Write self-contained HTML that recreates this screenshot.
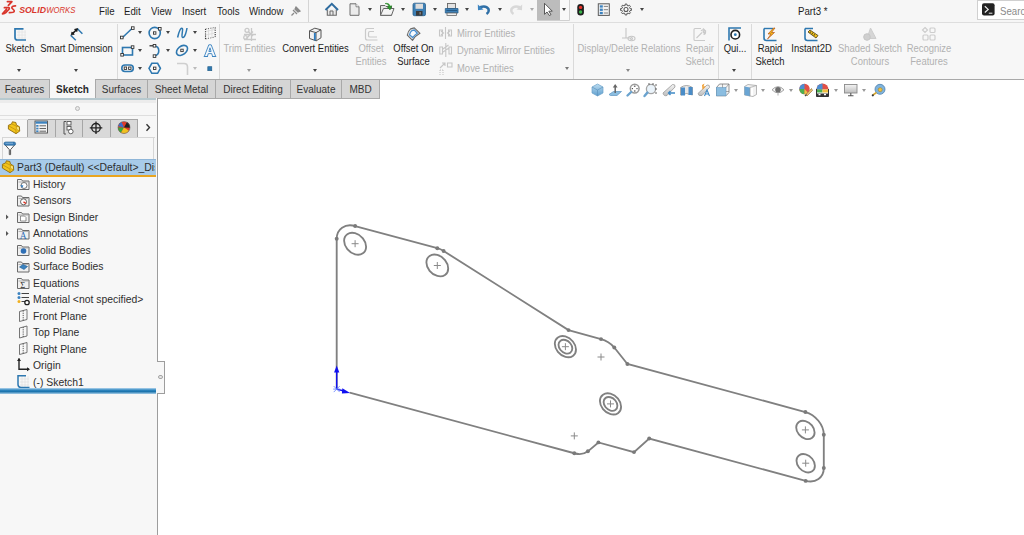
<!DOCTYPE html>
<html><head><meta charset="utf-8">
<style>
*{box-sizing:border-box;margin:0;padding:0}
html,body{width:1024px;height:535px;overflow:hidden;background:#fff;font-family:"Liberation Sans",sans-serif;color:#1e1e1e}
.a{position:absolute}
.t{position:absolute;white-space:nowrap;font-size:10px;line-height:13px;transform:scaleX(0.945);transform-origin:0 50%}
.t.ctr{transform-origin:50% 50%}
.dis{color:#b2b2b2}
.ctr{text-align:center}
#title{left:0;top:0;width:1024px;height:23px;background:#f6f6f6;border-bottom:1px solid #dedede}
#ribbon{left:0;top:23px;width:1024px;height:57px;background:#f7f7f7;border-bottom:1px solid #a9a9a9}
.sep{position:absolute;width:1px;background:#dadada}
.menu{position:absolute;top:4px;font-size:10.5px;transform:scaleX(0.92);transform-origin:0 50%;line-height:14px;color:#1e1e1e}
.tab{position:absolute;top:79px;height:20px;background:#d5d5d5;border:1px solid #a9a9a9;font-size:10px;line-height:18px;padding-top:1px;text-align:center;color:#333}
.tab.act{background:#f7f7f7;border-top:none;border-bottom:none;font-weight:bold;height:20px;padding-top:2px;color:#2a2a2a}
.arr{position:absolute;width:0;height:0;border-left:2.5px solid transparent;border-right:2.5px solid transparent;border-top:3px solid #444}
.arr.g{border-top-color:#888}
#panel{left:0;top:98px;width:158px;height:437px;background:#f7f7f7;border-right:1px solid #9d9d9d}
.tr{position:absolute;left:33px;font-size:10.4px;line-height:14px;color:#2e2e2e;white-space:nowrap}
</style></head><body>

<!-- TITLE BAR -->
<div id="title" class="a"></div>
<div class="a" style="left:0;top:0;width:80px;height:18px">
<svg width="80" height="18" viewBox="0 0 80 18">
  <g fill="none" stroke="#d9362c" stroke-width="1.7" stroke-linejoin="round" stroke-linecap="round">
    <path d="M7.4 1.6H11.9L8.4 5.4"/>
    <path d="M4.4 7.7H8.6Q9.8 7.9 9 9.2L6.2 12.3Q4.3 14 2.5 13.9L6.4 9.4"/>
    <path d="M15.5 5.9Q12.6 5.8 11.9 7.1Q11.4 8.1 12.9 9.1Q14.7 10.3 14.2 11.5Q13.7 12.7 9.4 12.7"/>
  </g>
  <text x="19.2" y="13" font-family="Liberation Sans" font-size="8.7" font-style="italic" fill="#d9362c"><tspan font-weight="bold" textLength="26.8" lengthAdjust="spacingAndGlyphs">SOLID</tspan><tspan x="46.2" textLength="29.2" lengthAdjust="spacingAndGlyphs" font-weight="normal">WORKS</tspan></text>
</svg>
</div>
<div class="menu" style="left:99px">File</div>
<div class="menu" style="left:124px">Edit</div>
<div class="menu" style="left:151px">View</div>
<div class="menu" style="left:182px">Insert</div>
<div class="menu" style="left:217px">Tools</div>
<div class="menu" style="left:249px">Window</div>
<div class="a" style="left:290px;top:3px"><svg width="12" height="12"><path d="M4 8 L1.5 10.5 M3 5 L7 9 M5 3 L9 7 M6 2 L10 6 L8 7 L5 4Z" stroke="#8a8a8a" stroke-width="1.3" fill="#8a8a8a"/></svg></div>
<div class="sep" style="left:308px;top:0;height:22px;background:#d4d4d4"></div>

<!--qat-->
<svg class="a" style="left:322px;top:0" width="330" height="22" viewBox="322 0 330 22">
 <!-- home -->
 <path d="M327.3 9.5V15.3H336.3V9.5" fill="#e9e9e9" stroke="#6b6b6b" stroke-width="1.1"/>
 <path d="M330 15.3V11H333V15.3" fill="none" stroke="#6b6b6b" stroke-width="1"/>
 <path d="M325.5 10L331.8 3.8L338 10" fill="none" stroke="#2f6c9f" stroke-width="2"/>
 <!-- new doc -->
 <path d="M350 3.8H356L359 6.8V15.3H350Z" fill="#ececec" stroke="#6e6e6e" stroke-width="1"/>
 <path d="M356 3.8V6.8H359" fill="#fff" stroke="#6e6e6e" stroke-width="0.8"/>
 <!-- open -->
 <path d="M380.5 5.5H385L386 6.5H391.5V15.3H380.5Z" fill="#e4e4e4" stroke="#666" stroke-width="1"/>
 <path d="M380.5 15.3L383.5 8.5H394L391.5 15.3Z" fill="#f4f4f4" stroke="#666" stroke-width="1"/>
 <path d="M385 3.5Q388 3.5 389 6.5L387.3 7L390 10L391.8 5.8L390.2 6.2Q389 2.5 385 3.5Z" fill="#2a9a2a" stroke="#1d7d1d" stroke-width="0.5"/>
 <!-- save -->
 <rect x="413" y="3.2" width="12.5" height="12.5" rx="1.5" fill="#3d7fb5" stroke="#2a5f8c" stroke-width="0.8"/>
 <rect x="415.5" y="3.8" width="7.5" height="5" fill="#dcdcdc"/>
 <rect x="416" y="11" width="6.5" height="4.7" fill="#3a3a3a"/>
 <rect x="419.5" y="12" width="1.3" height="2.5" fill="#8a8a8a"/>
 <!-- print -->
 <rect x="447.5" y="3.5" width="8" height="5" fill="#e2e2e2" stroke="#666" stroke-width="0.9"/>
 <path d="M445.3 8.5H458V13H445.3Z" fill="#3d7fb5" stroke="#2a5f8c" stroke-width="0.8"/>
 <rect x="447" y="13" width="9.5" height="2.5" fill="#f0f0f0" stroke="#666" stroke-width="0.8"/>
 <path d="M446.5 10.5H457" stroke="#1e4f78" stroke-width="0.8"/>
 <!-- undo -->
 <path d="M480 7.2Q486 5 488.5 9Q489.5 12 486.5 14" fill="none" stroke="#2f6fa6" stroke-width="2.4"/>
 <path d="M477.8 4.6L478 10.2L483.5 9.5Z" fill="#3c83bf"/>
 <!-- redo -->
 <path d="M520 7.2Q514 5 511.5 9Q510.5 12 513.5 14" fill="none" stroke="#d8d8d8" stroke-width="2.4"/>
 <path d="M522.2 4.6L522 10.2L516.5 9.5Z" fill="#d8d8d8"/>
 <!-- select btn -->
 <rect x="537" y="0" width="23" height="20.5" fill="#bcbcbc"/>
 <rect x="560" y="0" width="9.5" height="20.5" fill="#f9f9f9"/>
 <path d="M569.5 0V20.5H537" fill="none" stroke="#d0d0d0" stroke-width="1"/>
 <path d="M544.5 3.3V14.3L547 12L549.3 15.5L551 14.6L548.8 11.2H552.3Z" fill="#fff" stroke="#4a4a4a" stroke-width="0.9"/>
 <!-- traffic light -->
 <rect x="577.3" y="4" width="6.6" height="11.5" rx="3.3" fill="#1e1e1e"/>
 <circle cx="580.6" cy="7.4" r="1.7" fill="#e8332a"/>
 <circle cx="580.6" cy="12" r="1.7" fill="#3bb54a"/>
 <!-- list -->
 <rect x="598.3" y="3.8" width="11" height="11.6" fill="#f3f3f3" stroke="#5a5a5a" stroke-width="1"/>
 <rect x="599.8" y="5.3" width="3" height="2.3" fill="#3c83c0"/><rect x="599.8" y="8.6" width="3" height="2.3" fill="#3c83c0"/><rect x="599.8" y="11.9" width="3" height="2.3" fill="#3c83c0"/>
 <path d="M603.8 6.4H608M603.8 9.7H608M603.8 13H608" stroke="#777" stroke-width="0.9"/>
 <!-- gear -->
 <path d="M625.05 4.08 L626.95 4.08 L627.04 5.43 L628.42 6.06 L629.16 5.00 L630.50 6.34 L629.62 7.36 L630.14 8.78 L631.42 8.55 L631.42 10.45 L630.07 10.54 L629.44 11.92 L630.50 12.66 L629.16 14.00 L628.14 13.12 L626.72 13.64 L626.95 14.92 L625.05 14.92 L624.96 13.57 L623.58 12.94 L622.84 14.00 L621.50 12.66 L622.38 11.64 L621.86 10.22 L620.58 10.45 L620.58 8.55 L621.93 8.46 L622.56 7.08 L621.50 6.34 L622.84 5.00 L623.86 5.88 L625.28 5.36Z" fill="#f7f7f7" stroke="#5a5a5a" stroke-width="1" stroke-linejoin="round"/>
 <circle cx="626" cy="9.5" r="2" fill="#fff" stroke="#5a5a5a" stroke-width="1.1"/>

</svg>
<div class="arr" style="left:368px;top:8px"></div>
<div class="arr" style="left:401px;top:8px"></div>
<div class="arr" style="left:433px;top:8px"></div>
<div class="arr" style="left:465px;top:8px"></div>
<div class="arr" style="left:497.5px;top:8px"></div>
<div class="arr" style="left:529.5px;top:8px;border-top-color:#aaa"></div>
<div class="arr" style="left:562px;top:8px"></div>
<div class="arr" style="left:640px;top:8px"></div>

<!--/qat-->

<div class="menu" style="left:798px;top:4px">Part3 *</div>
<div class="a" style="left:977px;top:0px;width:50px;height:20px;background:#fff;border:1px solid #d0d0d0"></div>
<svg class="a" style="left:980px;top:1px" width="18" height="18" viewBox="980 1 18 18">
 <rect x="982" y="3.2" width="12.6" height="12.4" rx="2" fill="#222"/>
 <path d="M984.8 6.3L988.2 9.4L984.8 12.5" fill="none" stroke="#eee" stroke-width="1.2"/>
 <path d="M988.8 13.2H992.4" stroke="#eee" stroke-width="1"/>
</svg>
<div class="menu" style="left:1000px;top:3.5px;color:#8a8a8a">Search</div>

<!-- RIBBON -->
<div id="ribbon" class="a"></div>
<!--ribbonc-->
<div class="sep" style="left:117px;top:24px;height:55px"></div>
<div class="sep" style="left:219px;top:24px;height:55px"></div>
<div class="sep" style="left:573px;top:24px;height:55px"></div>
<div class="sep" style="left:718px;top:24px;height:55px"></div>
<div class="sep" style="left:751px;top:24px;height:55px"></div>

<!-- Sketch -->
<svg class="a" style="left:12px;top:26px" width="18" height="18" viewBox="0 0 18 18">
 <g stroke="#e4e4e4" stroke-width="0.8"><path d="M5 6H14M5 9H14M5 12H14M7 4V14M10 4V14M13 4V14"/></g>
 <path d="M11.5 2.8H3V11.5Q3 14 5.5 14H14" fill="none" stroke="#2e78b0" stroke-width="1.7"/>
</svg>
<div class="t ctr" style="left:0;top:42px;width:40px">Sketch</div>
<div class="arr" style="left:17px;top:69px"></div>
<!-- Smart Dimension -->
<svg class="a" style="left:68px;top:26px" width="18" height="18" viewBox="0 0 18 18">
 <path d="M2.6 9.2L7.8 14.2M9.2 2.5L14.4 7.8" stroke="#2e78b0" stroke-width="1.5" fill="none"/>
 <path d="M4.6 7.6L8.2 4" stroke="#1a1a1a" stroke-width="1.5"/>
 <path d="M3.2 9L3.9 5.9L6.3 8.3Z M9.6 2.6L8.9 5.7L6.5 3.3Z" fill="#1a1a1a" stroke="#1a1a1a" stroke-width="0.7"/>
</svg>
<div class="t ctr" style="left:36px;top:42px;width:81px">Smart Dimension</div>
<div class="arr" style="left:74px;top:69px"></div>

<!-- sketch tools grid -->
<svg class="a" style="left:118px;top:24px" width="102" height="54" viewBox="118 24 102 54">
 <g fill="none" stroke="#2e78b0" stroke-width="1.6">
  <path d="M122.5 37.5L132 28.5"/>
  <rect x="122.5" y="47.5" width="10" height="7.5"/>
  <rect x="121.8" y="65" width="11.5" height="6.5" rx="3.2"/>
  <circle cx="154.7" cy="33" r="5.6"/>
  <path d="M154.3 45.7A5.2 5.2 0 0 1 154.3 56"/>
  <path d="M149 68.3L151.8 63.3H157.6L160.4 68.3L157.6 73.3H151.8Z"/>
  <path d="M177.6 37.5C179 31 181 27 182.4 28.5C183.5 30 180.5 37 182.8 37.6C185 38 186.5 31 187 28" stroke-width="1.5"/>
  <ellipse cx="182" cy="50.4" rx="6.2" ry="4.2" transform="rotate(-38 182 50.4)"/>
 </g>
 <g fill="#fff" stroke="#333" stroke-width="0.9">
  <rect x="120.5" y="36.2" width="2.6" height="2.6"/><rect x="131.5" y="26.8" width="2.6" height="2.6"/>
  <rect x="131.3" y="45.8" width="2.6" height="2.6"/><rect x="120.8" y="53.5" width="2.6" height="2.6"/>
  <rect x="124.2" y="67" width="2.4" height="2.4"/><rect x="128.6" y="67" width="2.4" height="2.4"/>
  <rect x="153.5" y="31.8" width="2.4" height="2.4"/><rect x="158.5" y="27.5" width="2.6" height="2.6"/>
  <rect x="153.2" y="44.5" width="2.6" height="2.6"/><rect x="153.2" y="54.8" width="2.6" height="2.6"/>
  <rect x="153.5" y="67.1" width="2.4" height="2.4"/><rect x="180.8" y="49.2" width="2.4" height="2.4"/>
 </g>
 <path d="M149.5 45.8H153" stroke="#222" stroke-width="1.2"/>
 <g stroke="#d6d6d6" stroke-width="0.7" fill="none"><path d="M208.5 28.5V38M212 28V37.5M205.5 31.5L215 29.5M205.5 35L215 33"/></g>
 <g stroke="#333" stroke-width="1.1" stroke-dasharray="1.1 1.1" fill="none"><path d="M205.5 29V39M215.2 27.5V37"/></g>
 <g stroke="#555" stroke-width="0.8" stroke-dasharray="1.2 1.2" fill="none"><path d="M205.5 29L215.2 27.5M205.5 39L215.2 37"/></g>
 <path d="M204.3 56.5L208.8 44.8H211.2L215.7 56.5H212.6L211.7 53.6H208.3L207.4 56.5Z M208.9 51.5H211.1L210 47.8Z" fill="#f4f8fc" stroke="#3a82c0" stroke-width="0.9" stroke-linejoin="round"/>
 <path d="M203.8 56.5H208M212 56.5H216.2" stroke="#3a82c0" stroke-width="0.9"/>
 <path d="M177 63.5H184Q187.5 63.5 187.5 67V75" stroke="#cfcfcf" stroke-width="1.6" fill="none"/>
 <rect x="207.8" y="66.7" width="4" height="4" fill="#2e78b0" stroke="#1f5a86" stroke-width="0.6"/>
</svg>
<div class="arr" style="left:138px;top:31px"></div>
<div class="arr" style="left:138px;top:49px"></div>
<div class="arr" style="left:138px;top:67px"></div>
<div class="arr" style="left:165.5px;top:31px"></div>
<div class="arr" style="left:165.5px;top:49px"></div>
<div class="arr" style="left:193px;top:31px"></div>
<div class="arr" style="left:193px;top:49px"></div>
<div class="arr g" style="left:193px;top:67px;border-top-color:#bbb"></div>

<!-- Trim entities -->
<svg class="a" style="left:242px;top:27px" width="16" height="15" viewBox="0 0 16 15">
 <g fill="none" stroke="#c9c9c9" stroke-width="1.3">
  <circle cx="5" cy="3.3" r="2"/><path d="M6.5 4.8L11 9M11 4.5L4 12M9.5 1V14M2 7.5H14M2 12.5H14"/><circle cx="3.5" cy="10.5" r="1.8"/>
 </g>
</svg>
<div class="t ctr dis" style="left:219px;top:42px;width:61px">Trim Entities</div>
<div class="arr" style="left:247px;top:69px;border-top-color:#999"></div>
<!-- Convert entities -->
<svg class="a" style="left:308px;top:27px" width="15" height="15" viewBox="0 0 15 15">
 <path d="M1.5 3.8L6.8 1.2L13 2.8V10.8L8.2 13.8L1.5 11.5Z" fill="#f2f2f2" stroke="#555" stroke-width="1"/>
 <path d="M1.5 3.8L8 5.6L13 2.8M8 5.6V13.8" fill="none" stroke="#555" stroke-width="1"/>
 <path d="M6.8 6V13.5" stroke="#2b7bc0" stroke-width="1.8"/>
</svg>
<div class="t ctr" style="left:280px;top:42px;width:71px">Convert Entities</div>
<div class="arr" style="left:313px;top:69px"></div>
<!-- Offset entities -->
<svg class="a" style="left:364px;top:27px" width="15" height="15" viewBox="0 0 15 15">
 <path d="M10 1.5H3.5Q1.5 1.5 1.5 3.5V11Q1.5 13 3.5 13H13.5M10 4.5H6Q4.5 4.5 4.5 6V9Q4.5 10 6 10H13" fill="none" stroke="#cacaca" stroke-width="1.2"/>
</svg>
<div class="t ctr dis" style="left:351px;top:42px;width:40px">Offset</div>
<div class="t ctr dis" style="left:351px;top:55px;width:40px">Entities</div>
<!-- Offset On Surface -->
<svg class="a" style="left:402px;top:24px" width="24" height="20" viewBox="402 24 24 20">
 <path d="M407.3 35.2Q408 31 410.6 28.9L414.3 27.9L420 33.3Q415.5 35.5 412.5 40.4Z" fill="#e9e9e9" stroke="#6a6a6a" stroke-width="1.1" stroke-linejoin="round"/>
 <path d="M409.5 34.8Q410.2 31.8 412 30.5L414.3 30L417.3 33.2Q414.8 34.6 412.7 37.6Z" fill="#f8fbff" stroke="#4a90d0" stroke-width="1.3"/>
</svg>
<div class="t ctr" style="left:389px;top:42px;width:49px">Offset On</div>
<div class="t ctr" style="left:389px;top:55px;width:49px">Surface</div>

<!-- Mirror group -->
<svg class="a" style="left:438px;top:26px" width="16" height="50" viewBox="0 0 16 50">
 <g fill="none" stroke="#c6c6c6" stroke-width="1.1">
  <path d="M7.5 1V13M1.5 4H4.5V10H1.5ZM3 5L5.5 7L3 9M13.5 4H10.5V10H13.5ZM12 5L9.5 7L12 9"/>
  <path d="M7.8 17V31M1.8 21H4.5V28H1.8ZM13.5 21H11V28H13.5ZM5 23L10.5 19M5 26L11 22"/>
  <path d="M2 42L7 37M4 37H7V40M9.5 37H14V41H9.5Z"/>
  <path d="M2 44V49M5 44V49M2 44H5" stroke-dasharray="1 1"/>
 </g>
</svg>
<div class="t dis" style="left:457px;top:26.5px">Mirror Entities</div>
<div class="t dis" style="left:457px;top:44px">Dynamic Mirror Entities</div>
<div class="t dis" style="left:457px;top:62.3px">Move Entities</div>
<div class="arr" style="left:565px;top:67px;border-top-color:#777"></div>

<!-- Display/Delete Relations -->
<svg class="a" style="left:621px;top:27px" width="16" height="15" viewBox="0 0 16 15">
 <g fill="none" stroke="#c6c6c6" stroke-width="1.1"><path d="M5 1V11M1 11H9"/><ellipse cx="10.5" cy="11.5" rx="3.5" ry="2.2"/><circle cx="10.5" cy="11.5" r="1"/></g>
</svg>
<div class="t ctr dis" style="left:573px;top:42px;width:112px">Display/Delete Relations</div>
<div class="arr" style="left:626px;top:69px;border-top-color:#888"></div>
<!-- Repair sketch -->
<svg class="a" style="left:692px;top:27px" width="16" height="15" viewBox="0 0 16 15">
 <g fill="none" stroke="#cacaca" stroke-width="1.1"><path d="M9 1.5H3Q2 1.5 2 2.5V12.5Q2 13.5 3 13.5H13M11 1.5L14 4.5"/><path d="M4.5 11L10 5.5M9 4Q10.5 2 12.5 3.5L11 5L12 6L13.5 4.5Q14 7 11.5 7.5"/></g>
</svg>
<div class="t ctr dis" style="left:680px;top:42px;width:40px">Repair</div>
<div class="t ctr dis" style="left:680px;top:55px;width:40px">Sketch</div>
<!-- Quick snaps -->
<svg class="a" style="left:727px;top:26px" width="16" height="16" viewBox="0 0 16 16">
 <path d="M2 14.5V2H14" fill="none" stroke="#2e78b0" stroke-width="1.6"/>
 <circle cx="8.3" cy="8.7" r="4.3" fill="#fff" stroke="#222" stroke-width="1.6"/>
 <circle cx="8.3" cy="8.7" r="1.4" fill="#2e78b0"/>
</svg>
<div class="t ctr" style="left:719px;top:42px;width:32px">Qui...</div>
<div class="arr" style="left:732px;top:69px"></div>

<!-- Rapid Sketch -->
<svg class="a" style="left:762px;top:26px" width="16" height="16" viewBox="0 0 16 16">
 <path d="M2 2.5V12Q2 14.5 4.5 14.5H14.5" fill="none" stroke="#2e78b0" stroke-width="1.6"/>
 <path d="M2 2.5H11" stroke="#2e78b0" stroke-width="1.4"/>
 <path d="M11.5 2L6 8H9L5.5 13L12.5 6.5H9.5L13 2Z" fill="#f2b818" stroke="#b4551a" stroke-width="0.7"/>
</svg>
<div class="t ctr" style="left:751px;top:42px;width:38px">Rapid</div>
<div class="t ctr" style="left:751px;top:55px;width:38px">Sketch</div>
<!-- Instant2D -->
<svg class="a" style="left:803px;top:26px" width="16" height="16" viewBox="0 0 16 16">
 <path d="M2 2.5V12Q2 14.5 4.5 14.5H14.5M2 2.5H10" fill="none" stroke="#2e78b0" stroke-width="1.6"/>
 <path d="M5 6L7 4L15 9.5L13 12Z" fill="#f2c21a" stroke="#4a3a10" stroke-width="0.8"/>
 <path d="M7.5 5.5L7 7M9.5 6.8L9 8.3M11.5 8.2L11 9.7" stroke="#222" stroke-width="0.8"/>
</svg>
<div class="t ctr" style="left:788px;top:42px;width:47px">Instant2D</div>
<!-- Shaded sketch contours -->
<svg class="a" style="left:862px;top:26px" width="16" height="16" viewBox="0 0 16 16">
 <path d="M8.5 2L14 12.5H5Z" fill="#d6d6d6" stroke="#cdcdcd" stroke-width="1"/>
 <circle cx="5" cy="11" r="3.3" fill="#cfcfcf" stroke="#c6c6c6"/>
</svg>
<div class="t ctr dis" style="left:836px;top:42px;width:68px">Shaded Sketch</div>
<div class="t ctr dis" style="left:836px;top:55px;width:68px">Contours</div>
<!-- Recognize features -->
<svg class="a" style="left:921px;top:26px" width="16" height="16" viewBox="0 0 16 16">
 <g fill="none" stroke="#cdcdcd" stroke-width="1.2"><path d="M4 1.5L6.5 4L4 6.5L1.5 4Z"/><rect x="9" y="2" width="5" height="4.5" rx="1"/><rect x="2" y="9" width="5" height="5" rx="1"/><rect x="9" y="9" width="5" height="5" rx="1"/></g>
</svg>
<div class="t ctr dis" style="left:903px;top:42px;width:52px">Recognize</div>
<div class="t ctr dis" style="left:903px;top:55px;width:52px">Features</div>

<!--/ribbonc-->

<!-- TABS -->
<div class="tab" style="left:-1px;width:51px">Features</div>
<div class="tab" style="left:95px;width:53px">Surfaces</div>
<div class="tab" style="left:147px;width:69px">Sheet Metal</div>
<div class="tab" style="left:215px;width:76px">Direct Editing</div>
<div class="tab" style="left:290px;width:52px">Evaluate</div>
<div class="tab" style="left:341px;width:39px">MBD</div>
<div class="tab act" style="left:49px;width:47px">Sketch</div>

<!-- PANEL -->
<div id="panel" class="a"></div>
<!--panelc-->
<!-- top handle area -->
<div class="a" style="left:0;top:98px;width:156px;height:1.5px;background:#b7c9cf"></div>
<div class="a" style="left:0;top:100px;width:156px;height:3px;background:#ececec"></div>
<div class="a" style="left:74.5px;top:106px;width:5px;height:5px;border:1px solid #b8b8b8;border-radius:50%;background:#e8e8e8"></div>
<div class="a" style="left:0;top:115px;width:156px;height:1px;background:#dedede"></div>
<!-- tabs -->
<div class="a" style="left:27px;top:119px;width:111px;height:18px;background:#d9d9d9;border:1px solid #a6a6a6;border-bottom:none"></div>
<div class="a" style="left:54.5px;top:120px;width:1px;height:17px;background:#a6a6a6"></div>
<div class="a" style="left:82px;top:120px;width:1px;height:17px;background:#a6a6a6"></div>
<div class="a" style="left:109.5px;top:120px;width:1px;height:17px;background:#a6a6a6"></div>
<div class="a" style="left:0;top:119px;width:27.5px;height:1px;background:#e4e4e4"></div>
<div class="a" style="left:27px;top:136.5px;width:128px;height:1px;background:#d8d8d8"></div>
<svg class="a" style="left:0;top:118px" width="156" height="20" viewBox="0 118 156 20">
 <!-- part icon -->
 <g transform="translate(8 121.5)"><path d="M0.4 3.8L3.6 2.4L4.4 0.3L7.9 1L8.4 3.4L11.4 5.3L11.7 9.6L8 12.2L0.4 7.6Z" fill="#f3c41a" stroke="#8e6a0e" stroke-width="0.9" stroke-linejoin="round"/>
 <path d="M3.6 2.4L8.4 4.6V7.5L11.7 9.6M8.4 4.6L11.4 5.3M8 12.2V8.5L0.4 4.2" fill="none" stroke="#b58a10" stroke-width="0.7"/>
 <path d="M8.8 5.3L11 6V8.8L8.8 7.4Z" fill="#f8e27a"/></g>
 <!-- property manager -->
 <rect x="35" y="121" width="12.5" height="12" fill="#f2f2f2" stroke="#4d4d4d" stroke-width="0.9"/>
 <rect x="35.5" y="121.5" width="11.5" height="2.2" fill="#3c83c0"/>
 <rect x="36.2" y="125" width="2.3" height="1.7" fill="#3c83c0"/><rect x="36.2" y="127.7" width="2.3" height="1.7" fill="#3c83c0"/><rect x="36.2" y="130.4" width="2.3" height="1.7" fill="#3c83c0"/>
 <path d="M39.5 125.8H46M39.5 128.5H46M39.5 131.2H46" stroke="#555" stroke-width="0.9"/>
 <!-- config manager -->
 <path d="M64 121.5V134M64 121.5H66M64 134H66" stroke="#555" stroke-width="1" fill="none"/>
 <rect x="67" y="121.5" width="4" height="3.5" fill="#fff" stroke="#555" stroke-width="0.9"/>
 <rect x="67" y="126.5" width="4" height="3.5" fill="#fff" stroke="#555" stroke-width="0.9"/>
 <circle cx="70.8" cy="131.5" r="2.3" fill="#fff" stroke="#555" stroke-width="0.9"/>
 <!-- dimxpert -->
 <circle cx="96" cy="127.8" r="4.3" fill="none" stroke="#222" stroke-width="1.3"/>
 <path d="M96 121.5V134M89.8 127.8H102.3" stroke="#222" stroke-width="1.3"/>
 <!-- display manager -->
 <circle cx="124" cy="127.5" r="6" fill="#e03a2a"/>
 <path d="M124 127.5L118 127.5A6 6 0 0 0 121 132.7Z" fill="#3aaa3a"/>
 <path d="M124 127.5L121 132.7A6 6 0 0 0 129 130.8Z" fill="#f0c020"/>
 <path d="M124 127.5L118.2 126A6 6 0 0 1 121.5 122Z" fill="#3a6fd0"/>
 <path d="M124 127.5L127 122A6 6 0 0 1 130 127.8Z" fill="#222"/>
 <circle cx="124" cy="127.5" r="6" fill="none" stroke="#666" stroke-width="0.6"/>
 <path d="M146.5 124.3L149.5 127.5L146.5 130.7" fill="none" stroke="#333" stroke-width="1.4"/>
</svg>
<!-- filter box -->
<div class="a" style="left:2px;top:137px;width:152px;height:22px;border:1px solid #d6d6d6;border-bottom:none;background:#f7f7f7"></div>
<svg class="a" style="left:0;top:138px" width="20" height="20" viewBox="0 138 20 20">
 <path d="M4.8 144.5L9.3 149.6V154.6H10.6V149.6L15 144.5" fill="#fff" stroke="#555" stroke-width="1"/>
 <rect x="4" y="142" width="11.6" height="3.3" rx="1.6" fill="#3a7fba" stroke="#245d8c" stroke-width="0.6"/>
 <path d="M5.5 143.2H13" stroke="#a9cdea" stroke-width="0.7"/>
</svg>
<!-- Part3 row -->
<div class="a" style="left:0;top:158.5px;width:155.5px;height:17px;background:#a8cbe9;border-top:1px solid #8fb6d8"></div>
<div class="a" style="left:0;top:174.7px;width:155.5px;height:2.2px;background:#e9a520"></div>
<svg class="a" style="left:0;top:159px" width="17" height="16" viewBox="0 0 17 16">
 <g transform="translate(2 1.5)"><path d="M0.4 3.8L3.6 2.4L4.4 0.3L7.9 1L8.4 3.4L11.4 5.3L11.7 9.6L8 12.2L0.4 7.6Z" fill="#f3c41a" stroke="#8e6a0e" stroke-width="0.9" stroke-linejoin="round"/>
 <path d="M3.6 2.4L8.4 4.6V7.5L11.7 9.6M8.4 4.6L11.4 5.3M8 12.2V8.5L0.4 4.2" fill="none" stroke="#b58a10" stroke-width="0.7"/>
 <path d="M8.8 5.3L11 6V8.8L8.8 7.4Z" fill="#f8e27a"/></g>
</svg>
<div class="tr" style="left:17px;top:160.5px;width:138px;overflow:hidden">Part3 (Default) &lt;&lt;Default&gt;_Display State 1&gt;</div>
<!-- tree items -->
<svg class="a" style="left:0;top:176px" width="34" height="220" viewBox="0 176 34 220">
 <g fill="#f0f0f0" stroke="#6a6a6a" stroke-width="1">
  <path d="M17.5 179.5H21.5L22.5 181H29V189.5H17.5Z"/>
  <path d="M17.5 196H21.5L22.5 197.5H29V206H17.5Z"/>
  <path d="M17.5 212.5H21.5L22.5 214H29V222.5H17.5Z"/>
  <path d="M17.5 229H21.5L22.5 230.5H29V239H17.5Z"/>
  <path d="M17.5 245.5H21.5L22.5 247H29V255.5H17.5Z"/>
  <path d="M17.5 262H21.5L22.5 263.5H29V272H17.5Z"/>
  <path d="M17.5 278.5H21.5L22.5 280H29V288.5H17.5Z"/>
 </g>
 <g stroke="#9a9a9a" stroke-width="0.7" fill="none">
  <path d="M18.5 182H28M18.5 198.5H28M18.5 215H28M18.5 231.5H28M18.5 248H28M18.5 264.5H28M18.5 281H28"/>
 </g>
 <!-- history -->
 <circle cx="24" cy="185.5" r="3" fill="#fff" stroke="#555" stroke-width="0.8"/>
 <path d="M20.5 185L22 188L23.5 185.5Z" fill="#2f7bc0"/>
 <!-- sensors -->
 <circle cx="23.5" cy="201.8" r="3" fill="#fff" stroke="#555" stroke-width="0.9"/>
 <path d="M23.5 201.8L26 203.5" stroke="#e03020" stroke-width="1.4"/>
 <!-- design binder -->
 <path d="M20.5 216H24.5L26 217.5V221H20.5Z" fill="#fff" stroke="#777" stroke-width="0.8"/>
 <!-- annotations A -->
 <text x="19.8" y="238.5" font-family="Liberation Serif" font-size="9.5" fill="#2f6fb5">A</text>
 <!-- solid bodies -->
 <circle cx="23.5" cy="251" r="2.8" fill="#2f6fb5"/>
 <!-- surface bodies -->
 <path d="M19.5 267L23 264.5L27.5 266.5L24 269.5Z" fill="#3c83c0" stroke="#1e5a90" stroke-width="0.6"/>
 <!-- equations -->
 <text x="20.3" y="287.5" font-family="Liberation Serif" font-size="8.5" fill="#333">Σ</text>
 <!-- material -->
 <circle cx="19" cy="293.5" r="1.5" fill="#3c83c0"/><circle cx="19" cy="297.5" r="1.5" fill="#3c83c0"/><circle cx="19" cy="301.5" r="1.5" fill="#f0b020"/>
 <path d="M21.5 293.5H29M21.5 297.5H29M21.5 301.5H25" stroke="#444" stroke-width="1.1"/>
 <circle cx="27" cy="302.5" r="2.2" fill="#fff" stroke="#222" stroke-width="1.3"/>
 <!-- planes -->
 <g fill="none" stroke="#666" stroke-width="0.9">
  <path d="M19.5 311.5L27 309.5V319.5L19.5 321.5Z"/><path d="M19.5 328L27 326V336L19.5 338Z"/><path d="M19.5 344.5L27 342.5V352.5L19.5 354.5Z"/>
 </g>
 <g stroke="#444" stroke-width="0.9" stroke-dasharray="1.2 1"><path d="M23.2 310.5V320.5M23.2 327V337M23.2 343.5V353.5"/></g>
 <!-- origin -->
 <path d="M19 358.5V369.3H29" fill="none" stroke="#222" stroke-width="1.4"/>
 <path d="M17 361L19 358L21 361Z M27 367.3L30 369.3L27 371.3Z" fill="#222"/>
 <!-- sketch -->
 <g stroke="#e0e0e0" stroke-width="0.7"><path d="M20 379H29M20 382H29M20 385H29M22 376V387M25 376V387M28 376V387"/></g>
 <path d="M26 375.8H18V384.5Q18 387.4 21 387.4H29.5" fill="none" stroke="#2e78b0" stroke-width="1.5"/>
 <!-- expanders -->
 <path d="M6 214.5L8.6 217L6 219.5Z M6 231L8.6 233.5L6 236Z" fill="#555"/>
</svg>
<div class="tr" style="top:177.8px">History</div>
<div class="tr" style="top:194.3px">Sensors</div>
<div class="tr" style="top:210.8px">Design Binder</div>
<div class="tr" style="top:227.3px">Annotations</div>
<div class="tr" style="top:243.8px">Solid Bodies</div>
<div class="tr" style="top:260.3px">Surface Bodies</div>
<div class="tr" style="top:276.8px">Equations</div>
<div class="tr" style="top:293.3px">Material &lt;not specified&gt;</div>
<div class="tr" style="top:309.8px">Front Plane</div>
<div class="tr" style="top:326.3px">Top Plane</div>
<div class="tr" style="top:342.8px">Right Plane</div>
<div class="tr" style="top:359.3px">Origin</div>
<div class="tr" style="top:375.8px">(-) Sketch1</div>
<!-- rollback bar -->
<div class="a" style="left:0;top:388px;width:155.5px;height:6px;background:linear-gradient(#b5d6ee,#2f86c0 35%,#1b74ad 60%,#a9cfe9)"></div>
<!-- splitter handle -->
<div class="a" style="left:157px;top:360.5px;width:8px;height:33.5px;background:#f7f7f7;border:1px solid #9d9d9d;border-left:none"></div>
<div class="a" style="left:158px;top:374.5px;width:4.5px;height:4.5px;border:1.2px solid #a5a5a5;border-radius:50%;background:#e6e6e6"></div>
<!--/panelc-->

<!-- GRAPHICS -->
<!--hud-->
<svg class="a" style="left:586px;top:80px" width="304" height="20" viewBox="586 80 304 20">
 <defs>
  <linearGradient id="gb" x1="0" y1="0" x2="0" y2="1"><stop offset="0" stop-color="#bcdcf0"/><stop offset="1" stop-color="#5f9fcf"/></linearGradient>
  <linearGradient id="gg" x1="0" y1="0" x2="0" y2="1"><stop offset="0" stop-color="#f4f4f4"/><stop offset="1" stop-color="#bdbdbd"/></linearGradient>
 </defs>
 <!-- 1 cube -->
 <path d="M597.5 84L603 87V93L597.5 96L592 93V87Z" fill="url(#gb)" stroke="#6aa0c8" stroke-width="0.7"/>
 <path d="M592 87L597.5 90L603 87M597.5 90V96" fill="none" stroke="#5f93bd" stroke-width="0.7"/>
 <!-- 2 normal to -->
 <path d="M609 94.5L613.5 91.5H621.5L617 95.5H610.5Z" fill="#8bbde0" stroke="#5d94c0" stroke-width="0.7"/>
 <path d="M615.2 93V86" stroke="#666" stroke-width="1.5"/><path d="M612.8 87.5L615.2 84L617.6 87.5Z" fill="#666"/>
 <!-- 3 zoom fit -->
 <circle cx="634.7" cy="88.6" r="4.4" fill="#fff" stroke="#9a9a9a" stroke-width="1.5"/>
 <path d="M631.2 92L627.5 95.5" stroke="#6aa3cf" stroke-width="2.4" stroke-linecap="round"/>
 <g fill="#555"><rect x="633.9" y="85.6" width="1.6" height="1.2"/><rect x="633.9" y="90.4" width="1.6" height="1.2"/><rect x="631.8" y="88" width="1.2" height="1.2"/><rect x="636.4" y="88" width="1.2" height="1.2"/></g>
 <!-- 4 zoom area -->
 <circle cx="651" cy="89" r="4.6" fill="#eaf3fa" stroke="#a5a5a5" stroke-width="1.3"/>
 <path d="M647.4 92.6L644.5 96" stroke="#6aa3cf" stroke-width="2.4" stroke-linecap="round"/>
 <path d="M648 84H650M652 84H654M656 84V86M656 88V90M656 92V94" stroke="#555" stroke-width="0.9"/>
 <!-- 5 previous view -->
 <path d="M663 93L672.5 84.5Q675.5 84 675 87L667 95.5Q663.5 96.5 663 93Z" fill="url(#gg)" stroke="#9a9a9a" stroke-width="0.8"/>
 <path d="M669 93H675M670.5 91L668.5 93L670.5 95" fill="none" stroke="#3f8ac6" stroke-width="1.4"/>
 <!-- 6 section view -->
 <path d="M680.5 87.5Q686.5 83.5 692.5 87.5V95Q686.5 92 680.5 95Z" fill="#e8e8e8" stroke="#888" stroke-width="0.7"/>
 <rect x="681" y="87.5" width="4" height="8" fill="#4a8cc7"/><rect x="688.5" y="87" width="4" height="8" fill="#4a8cc7"/>
 <!-- 7 dynamic annotation -->
 <path d="M698 93.5L707 85Q710 84.5 709.5 87.5L702 95.5Q698.5 96.5 698 93.5Z" fill="url(#gg)" stroke="#9a9a9a" stroke-width="0.8"/>
 <path d="M702 85L704.5 83.5L703.5 86.5L706 86L702.5 90Z" fill="#f2a33a"/>
 <path d="M704.5 96L707 90L709.5 96M705.5 94H708.5" fill="none" stroke="#3f8ac6" stroke-width="1.1"/>
 <!-- 8 view orientation -->
 <path d="M716.5 87.5L719.5 84H729V92.5L726 95.8H716.5Z" fill="#f4f4f4" stroke="#777" stroke-width="0.8"/>
 <rect x="716.5" y="87.5" width="9.5" height="8.3" fill="#8bbde0" stroke="#6a9ec7" stroke-width="0.6"/>
 <path d="M726 87.5L729 84M722.5 84V87.5M726 91.5H729" stroke="#777" stroke-width="0.6"/>
 <!-- 9 display style -->
 <path d="M744.5 86.5L748 84.5L756.5 85.5V94.5L753 96.5L744.5 95Z" fill="#f2f2f2" stroke="#999" stroke-width="0.7"/>
 <path d="M744.5 86.5L750 87.5V96.2L744.5 95Z" fill="#6aa5d4"/>
 <path d="M750 87.5V96.2M750 87.5L756.5 85.5" stroke="#999" stroke-width="0.6" fill="none"/>
 <rect x="751" y="88" width="2" height="7.5" fill="#fff"/>
 <!-- 10 eye -->
 <path d="M772 89.8Q778 83.5 784 89.8Q778 96 772 89.8Z" fill="#f4f4f4" stroke="#9a9a9a" stroke-width="0.9"/>
 <circle cx="778" cy="89.8" r="2.8" fill="#6e6e6e"/>
 <path d="M778 93.5V95.5" stroke="#999" stroke-width="0.8"/>
 <!-- 11 edit appearance -->
 <circle cx="804.5" cy="89" r="5.2" fill="#e05048"/>
 <path d="M804.5 89H799.3A5.2 5.2 0 0 1 804.5 83.8Z" fill="#4c8ed2"/>
 <path d="M804.5 89H799.3A5.2 5.2 0 0 0 804.5 94.2Z" fill="#4caf50"/>
 <path d="M804.5 89V94.2A5.2 5.2 0 0 0 808 92.8Z" fill="#f0c040"/>
 <path d="M806 94.5L811.5 88.5L812.5 90.5L807 96Z" fill="#e8c070" stroke="#8a6a30" stroke-width="0.6"/>
 <path d="M805 96L806.5 94.5" stroke="#444" stroke-width="1.2"/>
 <!-- 12 apply scene -->
 <path d="M816.5 89.5A6 6 0 0 1 828.5 89.5Z" fill="#e05048"/>
 <path d="M816.5 89.5A6 6 0 0 1 822.5 83.5V89.5Z" fill="#4c8ed2"/>
 <rect x="816.5" y="89.5" width="6" height="3" fill="#4caf50"/><rect x="822.5" y="89.5" width="6" height="3" fill="#f0c040"/>
 <path d="M816.5 89V96.5H828.5V89" fill="none" stroke="#333" stroke-width="1"/>
 <rect x="816.5" y="93.5" width="12" height="3" fill="#333"/>
 <rect x="818.5" y="93.8" width="2" height="1.5" fill="#fff"/><rect x="824" y="93.8" width="2" height="1.5" fill="#fff"/>
 <!-- 13 monitor -->
 <rect x="844.5" y="84.5" width="12.5" height="8.5" fill="url(#gg)" stroke="#8a8a8a" stroke-width="0.9"/>
 <path d="M850.8 93V95.5M848 95.8H853.5" stroke="#555" stroke-width="1.1"/>
 <!-- 14 measure -->
 <circle cx="880" cy="89.3" r="5" fill="#7fb3dc" stroke="#4a7fae" stroke-width="0.8"/>
 <circle cx="880.2" cy="89.7" r="2" fill="#f0c040" stroke="#9a7a20" stroke-width="0.5"/>
 <path d="M876.5 92.5L873 95" stroke="#d8a830" stroke-width="1.6"/>
 <circle cx="872.8" cy="95.3" r="1.1" fill="#333"/>
</svg>
<div class="arr" style="left:733.5px;top:89px;border-top-color:#999"></div>
<div class="arr" style="left:761px;top:89px;border-top-color:#999"></div>
<div class="arr" style="left:788.5px;top:89px;border-top-color:#999"></div>
<div class="arr" style="left:834px;top:89px;border-top-color:#999"></div>
<div class="arr" style="left:861.5px;top:89px;border-top-color:#999"></div>

<!--/hud-->
<!--sketch-->
<svg class="a" style="left:0;top:0" width="1024" height="535" viewBox="0 0 1024 535">
<g transform="matrix(1 0.27 0 0.963 336.7 389.1)" fill="none" stroke="#808080" stroke-width="1.85">
<path vector-effect="non-scaling-stroke" d="M0 0 L0 -156.1 A18.4 18.4 0 0 1 18.4 -174.5 L100.6 -174.5 A18 18 0 0 1 106.9 -173.4 L231.8 -126.3 L264.3 -126.0 A18.6 18.6 0 0 1 277.6 -121.0 L290.7 -107.6 L468.7 -107.6 A18.4 18.4 0 0 1 487.1 -89.2 L487.1 -54.6 A18.4 18.4 0 0 1 469 -36.2 L312.5 -36.3 L297.3 -17.9 L261.7 -18.0 L251.2 -5.8 A18 18 0 0 1 237.6 0 L13 0"/>
<circle vector-effect="non-scaling-stroke" cx="18.4" cy="-156.1" r="11"/>
<circle vector-effect="non-scaling-stroke" cx="100.6" cy="-156.6" r="10.9"/>
<circle vector-effect="non-scaling-stroke" cx="228.7" cy="-108.2" r="10.6"/>
<circle vector-effect="non-scaling-stroke" cx="228.7" cy="-108.2" r="6.9"/>
<circle vector-effect="non-scaling-stroke" cx="273.8" cy="-61.4" r="10.6"/>
<circle vector-effect="non-scaling-stroke" cx="273.8" cy="-61.4" r="6.9"/>
<circle vector-effect="non-scaling-stroke" cx="468.7" cy="-89.0" r="9.2"/>
<circle vector-effect="non-scaling-stroke" cx="469" cy="-54.5" r="9.2"/>
</g>
<g fill="#7a7a7a">
<circle cx="336.7" cy="238.8" r="1.95"/>
<circle cx="355.1" cy="226.0" r="1.95"/>
<circle cx="437.3" cy="248.2" r="1.95"/>
<circle cx="443.6" cy="251.0" r="1.95"/>
<circle cx="568.5" cy="330.1" r="1.95"/>
<circle cx="601.0" cy="339.1" r="1.95"/>
<circle cx="614.3" cy="347.5" r="1.95"/>
<circle cx="627.4" cy="364.0" r="1.95"/>
<circle cx="805.4" cy="412.0" r="1.95"/>
<circle cx="823.8" cy="434.7" r="1.95"/>
<circle cx="823.8" cy="468.0" r="1.95"/>
<circle cx="805.7" cy="480.9" r="1.95"/>
<circle cx="649.2" cy="438.5" r="1.95"/>
<circle cx="634.0" cy="452.1" r="1.95"/>
<circle cx="598.4" cy="442.4" r="1.95"/>
<circle cx="587.9" cy="451.3" r="1.95"/>
<circle cx="574.3" cy="453.3" r="1.95"/>
</g>
<g stroke="#8a8a8a" stroke-width="1" fill="none">
<path d="M351.6 243.7H358.6M355.1 240.2V247.2"/>
<path d="M433.8 265.5H440.8M437.3 262.0V269.0"/>
<path d="M561.9 346.7H568.9M565.4 343.2V350.2"/>
<path d="M607.0 403.9H614.0M610.5 400.4V407.4"/>
<path d="M801.9 429.9H808.9M805.4 426.4V433.4"/>
<path d="M802.2 463.2H809.2M805.7 459.7V466.7"/>
<path d="M597.5 357.0H604.5M601.0 353.5V360.5"/>
<path d="M570.8 435.9H577.8M574.3 432.4V439.4"/>
</g>
<g fill="#1010f0" stroke="#1010f0">
<path d="M336.7 389.1 V371" stroke-width="1.4"/>
<path d="M334.09999999999997 372.5 L336.7 365.5 L339.3 372.5Z" stroke="none"/>
<path d="M336.7 389.1 L343 390.8" stroke-width="1.5"/>
<path d="M342.3 388.3 L350.2 392.9 L341.9 393.6Z" stroke="none"/>
</g>
<g stroke="#5a7aff" stroke-width="0.8"><path d="M333.7 386.1L339.7 392.1M339.7 386.1L333.7 392.1M333.2 389.1H340.2"/></g>
</svg>
<!--/sketch-->

</body></html>
